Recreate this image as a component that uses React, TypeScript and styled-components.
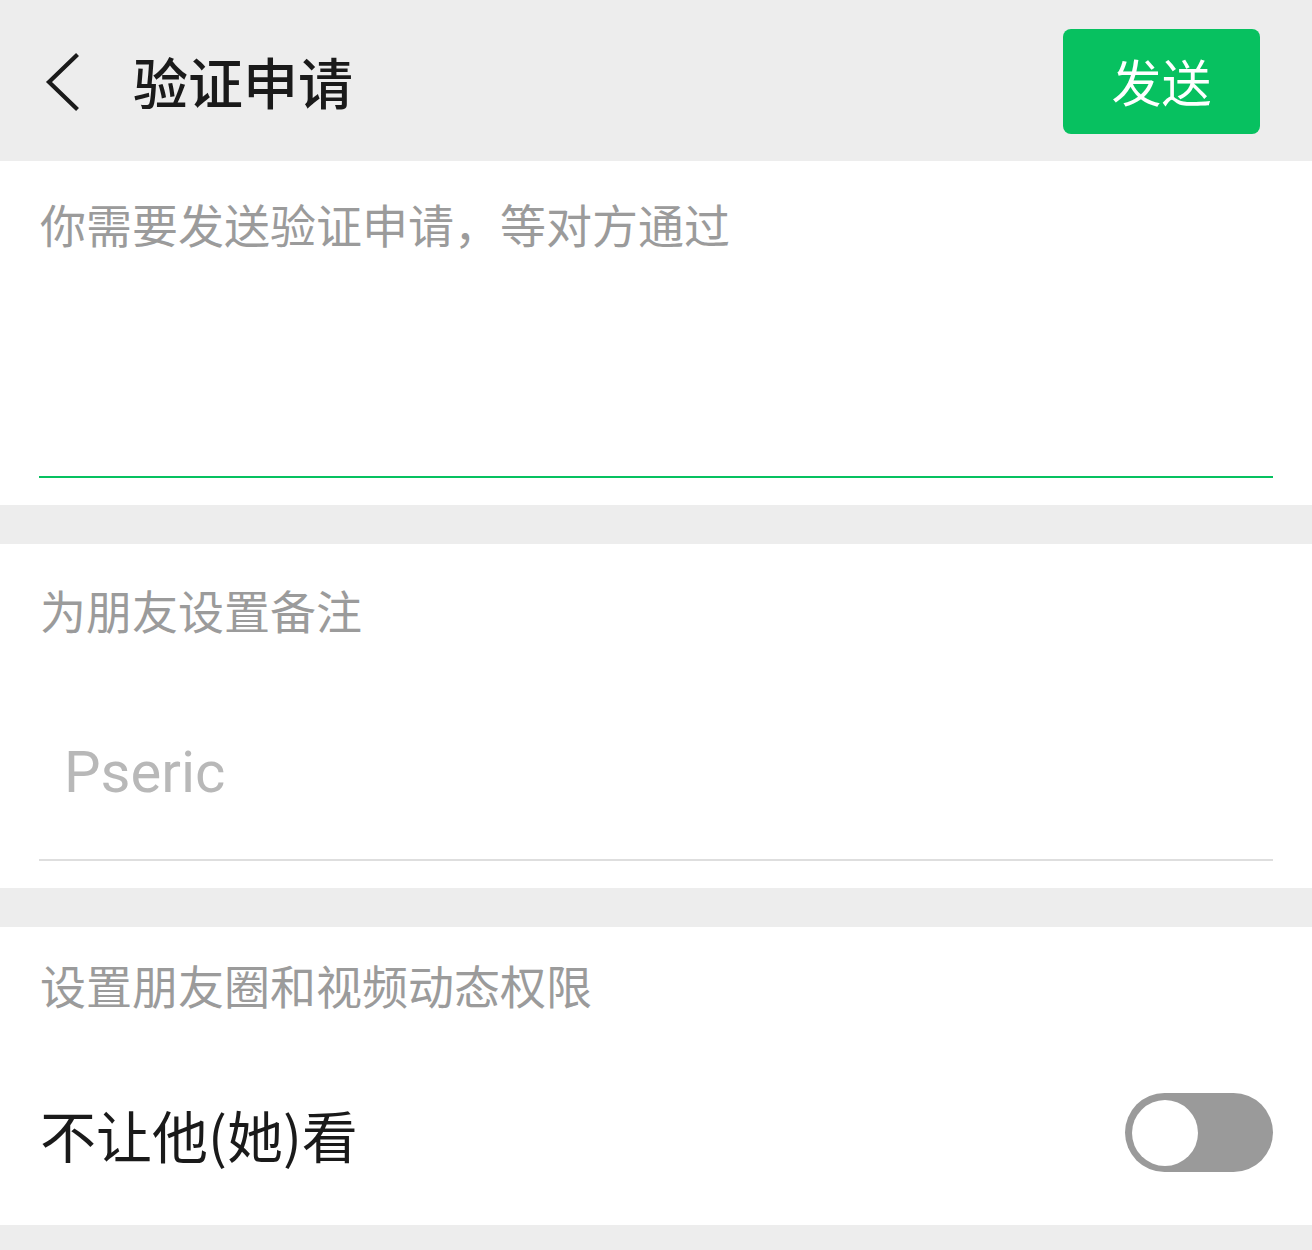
import { styled, createGlobalStyle } from "styled-components"

const GlobalStyle = createGlobalStyle`
  html, body {
    margin: 0;
    padding: 0;
    background: #ededed;
  }
  body {
    font-family: "Noto Sans CJK SC", "Noto Sans", sans-serif;
  }
`

const sections = [
  { label: "为朋友设置备注", top: 42 },
  { label: "设置朋友圈和视频动态权限", top: 34 },
]

const BackIcon = () => (
  <svg width="40" height="60" viewBox="0 0 40 60">
    <polyline points="32,4 5,30 32,56" fill="none" stroke="#1a1a1a" strokeWidth="4.2" strokeLinecap="square" />
  </svg>
)

const App = () => {
  return (
    <Page>
      <GlobalStyle />
      <Header>
        <div className="left">
          <BackIcon />
          <h1>验证申请</h1>
        </div>
        <SendButton type="button">发送</SendButton>
      </Header>

      <Section $top={39} $bottom={27}>
        <MessageBox>
          <Hint>你需要发送验证申请，等对方通过</Hint>
        </MessageBox>
      </Section>

      <Section $top={sections[0].top} $bottom={27}>
        <Hint>{sections[0].label}</Hint>
        <RemarkInput>Pseric</RemarkInput>
      </Section>

      <Section $top={sections[1].top} $bottom={53}>
        <Hint>{sections[1].label}</Hint>
        <SwitchRow>
          <span>不让他(她)看</span>
          <Toggle>
            <div className="knob" />
          </Toggle>
        </SwitchRow>
      </Section>
    </Page>
  )
}

const Page = styled.div`
  display: flex;
  flex-direction: column;
  gap: 39px;
  min-height: 1250px;
  background: #ededed;
`

const Header = styled.header`
  height: 161px;
  margin-bottom: -39px;
  display: flex;
  align-items: center;
  justify-content: space-between;
  padding: 0 52px 0 44px;
  box-sizing: border-box;
  background: #ededed;

  .left {
    display: flex;
    align-items: center;
    gap: 49px;
    svg {
      margin-top: 2px;
    }
  }

  h1 {
    margin: 0;
    font-size: 55px;
    font-weight: 500;
    color: #1a1a1a;
    line-height: 1;
    letter-spacing: 0;
  }
`

const SendButton = styled.button`
  width: 197px;
  height: 105px;
  margin-top: 2px;
  border: none;
  border-radius: 8px;
  background: #07c160;
  color: #fff;
  font-family: "Noto Sans CJK SC", sans-serif;
  font-size: 50px;
  line-height: 1;
  padding: 0 0 4px;
`

const Section = styled.section<{ $top: number; $bottom: number }>`
  background: #fff;
  padding: ${({ $top }) => $top}px 39px ${({ $bottom }) => $bottom}px 39px;
  display: flex;
  flex-direction: column;
`

const Hint = styled.div`
  font-size: 46px;
  line-height: 46px;
  color: #9b9b9b;
  letter-spacing: 0;
  padding-left: 1px;
`

const MessageBox = styled.div`
  height: 276px;
  border-bottom: 2px solid #07c160;
`

const RemarkInput = styled.div`
  margin-top: 111px;
  padding: 0 0 58px 25px;
  font-family: Roboto, "Noto Sans", sans-serif;
  font-size: 58px;
  line-height: 58px;
  color: #b8b8b8;
  border-bottom: 2px solid #dedede;
`

const SwitchRow = styled.div`
  margin-top: 86px;
  display: flex;
  align-items: center;
  justify-content: space-between;

  span {
    font-size: 56px;
    line-height: 1;
    color: #1a1a1a;
    margin-top: 2px;
    margin-left: 1px;
  }
`

const Toggle = styled.div`
  width: 148px;
  height: 79px;
  border-radius: 40px;
  background: #9a9a9a;
  display: flex;
  align-items: center;
  padding: 0 7px;
  box-sizing: border-box;

  .knob {
    width: 66px;
    height: 66px;
    border-radius: 50%;
    background: #fff;
  }
`

export default App
